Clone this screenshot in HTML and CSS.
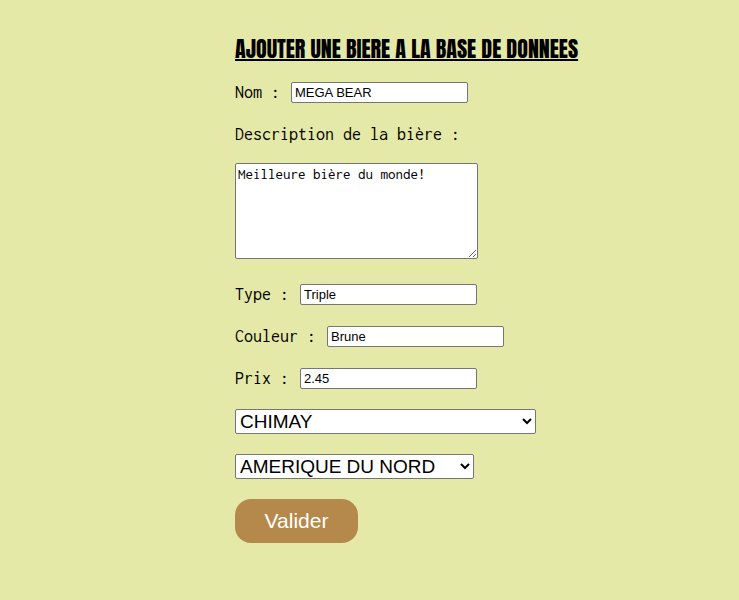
FILE: index.html
```html
<!DOCTYPE html>
<html lang="fr">
<head>
<meta charset="utf-8">
<title>Ajouter une bière</title>
<link rel="stylesheet" href="styles.css">
</head>
<body>
<main class="page">
<h1 class="title">AJOUTER UNE BIERE A LA BASE DE DONNEES</h1>
<form class="form">
<div class="row"><label for="nom">Nom :</label><input class="field" id="nom" type="text" value="MEGA BEAR"></div>
<label class="row" for="description">Description de la bière :</label>
<textarea class="description" id="description">Meilleure bière du monde!</textarea>
<div class="row"><label for="type">Type :</label><input class="field" id="type" type="text" value="Triple"></div>
<div class="row"><label for="couleur">Couleur :</label><input class="field" id="couleur" type="text" value="Brune"></div>
<div class="row"><label for="prix">Prix :</label><input class="field" id="prix" type="text" value="2.45"></div>
<select class="choice brand" aria-label="Marque"><option>CHIMAY</option></select>
<select class="choice region" aria-label="Région"><option>AMERIQUE DU NORD</option></select>
<button class="submit" type="button">Valider</button>
</form>
</main>
</body>
</html>
```
FILE: styles.css
```css
* {
  box-sizing: border-box;
}

body {
  margin: 0;
  background: #e5e9a8;
  color: #000;
}

.page {
  padding: 36px 20px 36px 235px;
}

.title {
  margin: 0 0 19px;
  font: 400 22px/26px Impact, Anton, "Liberation Sans Narrow", "Liberation Sans", sans-serif;
  text-decoration: underline;
  text-decoration-thickness: 2px;
  white-space: nowrap;
}

.form {
  display: flex;
  flex-direction: column;
  align-items: flex-start;
  gap: 20px;
}

.row {
  display: flex;
  align-items: center;
  gap: 11px;
  height: 22px;
  font: 18px/20px Inconsolata, Consolas, "DejaVu Sans Mono", monospace;
}

.field {
  width: 177px;
  height: 21px;
  padding: 1px 3px;
  border: 1px solid #767676;
  border-radius: 2px;
  background: #fff;
  color: #000;
  font: 13px/15px "Liberation Sans", Arial, sans-serif;
}

.description {
  width: 243px;
  height: 96px;
  margin: -2px 0 4px;
  padding: 2px;
  border: 1px solid #767676;
  border-radius: 2px;
  background: #fff;
  color: #000;
  font: 15px/16px Inconsolata, Consolas, "DejaVu Sans Mono", monospace;
}

.choice {
  height: 25px;
  border: 1px solid #767676;
  border-radius: 2px;
  background: #fff;
  color: #000;
  font: 19px/22px "Liberation Sans", Arial, sans-serif;
}

.brand {
  width: 301px;
}

.region {
  width: 239px;
}

.submit {
  width: 123px;
  height: 44px;
  border: 0;
  border-radius: 16px;
  background: #b5894b;
  color: #fff;
  font: 21px/24px "Liberation Sans", Arial, sans-serif;
}
```
